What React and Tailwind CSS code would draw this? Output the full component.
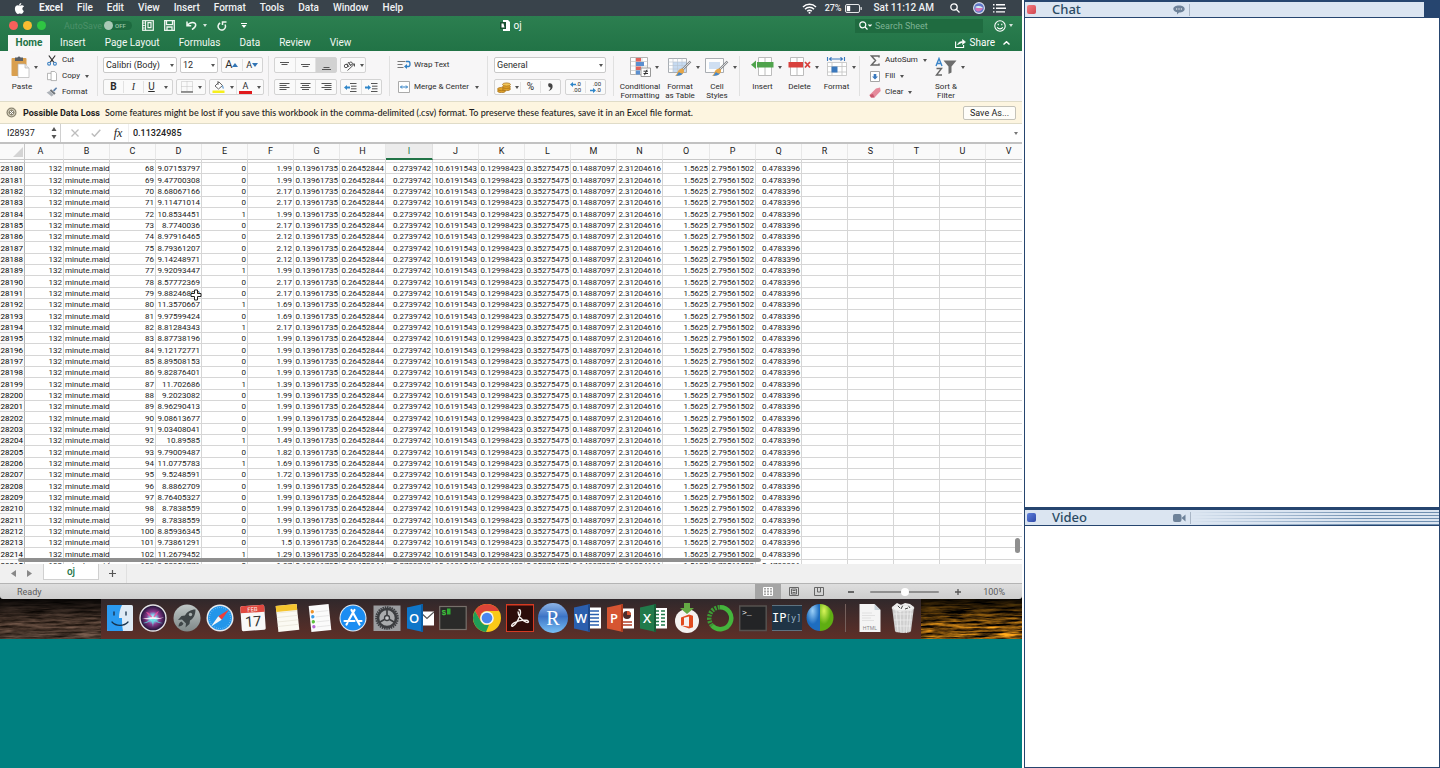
import React from "react";

const COLUMNS = "ABCDEFGHIJKLMNOPQRSTUV".split("");

const ROWS = [
  [68, "9.07153797", 0, "1.99"],
  [69, "9.47700308", 0, "1.99"],
  [70, "8.68067166", 0, "2.17"],
  [71, "9.11471014", 0, "2.17"],
  [72, "10.8534451", 1, "1.99"],
  [73, "8.7740036", 0, "2.17"],
  [74, "8.97916465", 0, "2.12"],
  [75, "8.79361207", 0, "2.12"],
  [76, "9.14248971", 0, "2.12"],
  [77, "9.92093447", 1, "1.99"],
  [78, "8.57772369", 0, "2.17"],
  [79, "9.88246808", 0, "2.17"],
  [80, "11.3570667", 1, "1.69"],
  [81, "9.97599424", 0, "1.69"],
  [82, "8.81284343", 1, "2.17"],
  [83, "8.87738196", 0, "1.99"],
  [84, "9.12172771", 0, "1.99"],
  [85, "8.89508153", 0, "1.99"],
  [86, "9.82876401", 0, "1.99"],
  [87, "11.702686", 1, "1.39"],
  [88, "9.2023082", 0, "1.99"],
  [89, "8.96290413", 0, "1.99"],
  [90, "9.08613677", 0, "1.99"],
  [91, "9.03408041", 0, "1.99"],
  [92, "10.89585", 1, "1.49"],
  [93, "9.79009487", 0, "1.82"],
  [94, "11.0775783", 1, "1.69"],
  [95, "9.5248591", 0, "1.72"],
  [96, "8.8862709", 0, "1.99"],
  [97, "8.76405327", 0, "1.99"],
  [98, "8.7838559", 0, "1.99"],
  [99, "8.7838559", 0, "1.99"],
  [100, "8.85936345", 0, "1.99"],
  [101, "9.73861291", 0, "1.5"],
  [102, "11.2679452", 1, "1.29"],
  [103, "9.02956771", 0, "1.87"],
];

const STORE = [
  "0.13961735", "0.26452844", "0.2739742", "10.6191543", "0.12998423", "0.35275475",
  "0.14887097", "2.31204616", "1.5625", "2.79561502", "0.4783396",
];

function Caret({ className = "" }) {
  return (
    <svg viewBox="0 0 4 3" className={"h-[3px] w-1 shrink-0 opacity-80 " + className} fill="currentColor" aria-hidden="true">
      <path d="M0 0h4L2 3z" />
    </svg>
  );
}

/* ---------- menu bar ---------- */

function MenuBar() {
  return (
    <header className="flex h-4 items-center bg-[#39434b] pr-4 pl-[14px] text-[10px] leading-4 font-medium text-[#f0f2f3]">
      <svg viewBox="0 0 14 16" className="h-[11px] w-[11px]" fill="#fff" aria-label="Apple">
        <path d="M9.600 0c.1 1-.3 1.900-.9 2.600-.6.7-1.500 1.200-2.300 1.100-.1-.9.300-1.900.900-2.500C7.900.5 8.900 0 9.600 0zM12.900 5.500c-.1.100-1.700 1-1.700 3 0 2.300 2 3.100 2.100 3.100 0 .1-.3 1.100-1.100 2.200-.7 1-1.400 2-2.500 2s-1.400-.6-2.600-.6c-1.200 0-1.600.7-2.600.7s-1.700-.9-2.500-2.100C1 12.400.3 10.200.3 8.200c0-3.300 2.200-5 4.300-5 1.100 0 2.100.700 2.800.700.700 0 1.700-.800 3-.800.500 0 2.200 0 3.300 1.600z" />
      </svg>
      <nav className="ml-[14px] flex gap-[14px]" aria-label="Menu bar">
        <a href="#excel" className="font-bold">Excel</a>
        <a href="#file">File</a>
        <a href="#edit">Edit</a>
        <a href="#view">View</a>
        <a href="#insert">Insert</a>
        <a href="#format">Format</a>
        <a href="#tools">Tools</a>
        <a href="#data">Data</a>
        <a href="#window">Window</a>
        <a href="#help">Help</a>
      </nav>
      <div className="ml-auto flex items-center">
        <svg viewBox="0 0 15 11" className="h-[11px] w-[15px]" fill="none" stroke="#fff" strokeWidth="1.500" aria-label="Wi-Fi">
          <path d="M1 4a9.200 9.200 0 0 1 13 0M3 6.200a6.400 6.400 0 0 1 9 0M5.200 8.300a3.300 3.300 0 0 1 4.600 0" />
          <circle cx="7.500" cy="9.800" r="1" fill="#fff" stroke="none" />
        </svg>
        <span className="ml-2 text-[9px]">27%</span>
        <svg viewBox="0 0 17 9" className="ml-[3px] h-[9px] w-[17px]" aria-label="Battery">
          <rect x=".5" y=".5" width="14" height="8" rx="1.500" fill="none" stroke="#e6e8e9" />
          <rect x="1.800" y="1.800" width="3.400" height="5.400" fill="#fff" />
          <rect x="15.500" y="3" width="1.300" height="3" rx=".6" fill="#e6e8e9" />
        </svg>
        <time className="ml-3">Sat 11:12 AM</time>
        <svg viewBox="0 0 10 10" className="ml-4 h-[10px] w-[10px]" fill="none" stroke="#fff" strokeWidth="1.300" aria-label="Search">
          <circle cx="4" cy="4" r="3.200" />
          <path d="M6.500 6.500 9.500 9.500" />
        </svg>
        <svg viewBox="0 0 12 12" className="ml-[13px] h-3 w-3" aria-label="Siri">
          <circle cx="6" cy="6" r="5.400" fill="#5d78c9" stroke="#dfe3f0" strokeWidth="1.100" />
          <path d="M2 7c2-4 5-4 8-1-2 4-6 5-8 1z" fill="#d477b8" />
          <path d="M2 5c3-2 6-1 8 1-3-.5-5 1-8-1z" fill="#c9f1f7" />
        </svg>
        <svg viewBox="0 0 13 9" className="ml-2 h-[9px] w-[13px]" fill="#fff" aria-label="Notifications">
          <path d="M0 0h1.500v1.400H0zM3 0h9v1.400H3zM0 3.600h1.500V5H0zM3 3.600h10V5H3zM0 7.200h1.500v1.400H0zM3 7.200h9v1.400H3z" />
        </svg>
      </div>
    </header>
  );
}

/* ---------- title bar and tabs ---------- */

function TitleBar() {
  return (
    <div className="grid h-[19px] grid-cols-[1fr_auto_1fr] items-center text-white">
      <div className="flex items-center pl-[9px]">
        <button aria-label="Close" className="size-[9px] rounded-full bg-[#f8605b]" />
        <button aria-label="Minimize" className="ml-[5px] size-[9px] rounded-full bg-[#f8bd31]" />
        <button aria-label="Zoom" className="ml-[5px] size-[9px] rounded-full bg-[#2fc643]" />
        <span className="ml-[18px] w-10 text-[9px] leading-3 text-[#4b9069]">AutoSave</span>
        <button role="switch" aria-checked="false" aria-label="AutoSave" className="flex h-[9px] w-7 items-center rounded-full bg-[#1d6a3f] text-[6px] leading-[9px] font-medium text-[#9ac4aa]">
          <span className="size-[9px] rounded-full bg-[#a9c9b6]" />
          <span className="ml-[2px]">OFF</span>
        </button>
        <button aria-label="Layout" className="ml-[10px]">
          <svg viewBox="0 0 12 11" className="h-[11px] w-3" fill="none" stroke="#eef6f0" strokeWidth="1.200">
            <rect x=".7" y=".7" width="10.600" height="9.600" />
            <path d="M3.500.7v9.600M.7 3h2M.7 5.500h2M.7 8h2M6 2.700h3v5H6z" />
          </svg>
        </button>
        <button aria-label="Save" className="ml-[10px]">
          <svg viewBox="0 0 11 11" className="size-[11px]" fill="none" stroke="#eef6f0" strokeWidth="1.300">
            <path d="M.7.7h9.600v9.600H.7zM2.500.7v4h6v-4M3 10V7h5v3" />
          </svg>
        </button>
        <button aria-label="Undo" className="ml-[11px] flex items-center">
          <svg viewBox="0 0 11 9" className="h-[9px] w-[11px]" fill="none" stroke="#eef6f0" strokeWidth="1.500">
            <path d="M1 .5v4.200h4.200M1.200 4.500C4 .5 9.700.5 9.700 4 9.700 6 7.500 7.500 6 8.600" />
          </svg>
          <Caret className="ml-[6px]" />
        </button>
        <button aria-label="Redo" className="ml-[10px]">
          <svg viewBox="0 0 10 10" className="size-[10px]" fill="none" stroke="#eef6f0" strokeWidth="1.500">
            <path d="M8 3.500A3.700 3.700 0 1 1 3.200 2M5.500 4V1h4" />
          </svg>
        </button>
        <button aria-label="Customize toolbar" className="ml-[14px]">
          <svg viewBox="0 0 6 5" className="h-[5px] w-[6px]" fill="#fff">
            <path d="M0 0h6v1H0zM.5 2h5L3 5z" />
          </svg>
        </button>
      </div>
      <h1 className="flex items-center gap-[3px] text-[10px] leading-3">
        <svg viewBox="0 0 10 11" className="h-[11px] w-[10px]">
          <path d="M3 0h5l2 2v9H3z" fill="#fff" />
          <path d="M0 2h6v7H0z" fill="#1a4f31" />
          <path d="M1.500 3.500h2l1 4h-3z" fill="#fff" />
        </svg>
        oj
      </h1>
      <div className="flex items-center justify-end pr-[9px]">
        <label className="flex h-[14px] w-32 items-center bg-[#1f6b40] pl-1 text-white">
          <svg viewBox="0 0 13 9" className="h-[9px] w-[13px]" fill="none" stroke="currentColor" strokeWidth="1.200">
            <circle cx="3.800" cy="3.800" r="3" />
            <path d="M6 6l2.500 2.500M9.500 3.500 11 5l1.500-1.500" />
          </svg>
          <input aria-label="Search Sheet" placeholder="Search Sheet" className="ml-[3px] w-24 bg-transparent text-[9px] leading-3 outline-none placeholder:text-[#7db394]" />
        </label>
        <button aria-label="Feedback" className="ml-[11px] flex items-center gap-[3px]">
          <svg viewBox="0 0 12 12" className="size-3" fill="none" stroke="#fff" strokeWidth="1.100">
            <circle cx="6" cy="6" r="5.200" />
            <path d="M3.300 7.200c1 2.200 4.400 2.200 5.400 0M4.200 3.800v1.400M7.800 3.800v1.400" />
          </svg>
          <Caret />
        </button>
      </div>
    </div>
  );
}

function Tabs() {
  return (
    <div className="flex h-4 items-center gap-[19px] pr-3 pl-2 text-[10px] leading-4 text-[#f2f8f4]">
      <button className="h-4 w-[42px] bg-[#f7f7f7] font-bold text-[#217346]">Home</button>
      <button className="-ml-[9px]">Insert</button>
      <button>Page Layout</button>
      <button>Formulas</button>
      <button>Data</button>
      <button>Review</button>
      <button>View</button>
      <button className="ml-auto flex items-center gap-1 text-white">
        <svg viewBox="0 0 11 9" className="h-[9px] w-[11px]" fill="none" stroke="#fff" strokeWidth="1.100">
          <path d="M.6 2.500v6h8V6" />
          <path d="M2.500 6C3 3.500 5 2.500 7.500 2.500V.5L10.500 3 7.500 5.500v-2" fill="#fff" strokeWidth=".6" />
        </svg>
        Share
        <svg viewBox="0 0 7 4" className="ml-1 h-1 w-[7px]" fill="none" stroke="#fff" strokeWidth="1.400">
          <path d="M.5 3.500 3.500.7l3 2.800" />
        </svg>
      </button>
    </div>
  );
}

/* ---------- ribbon ---------- */

const box = "flex h-4 items-center rounded-[2px] border border-[#d3d3d3] bg-[#fafafa]";

function Divider() {
  return <div className="mt-[5px] h-10 w-px shrink-0 bg-[#e0e0e0]" />;
}

function Picker({ label, value, width }) {
  return (
    <div className={"relative h-4 " + width}>
      <select aria-label={label} className="block h-4 w-full appearance-none rounded-[2px] border border-[#c9c9c9] bg-white pl-[2px] text-[9px] leading-[14px]">
        <option>{value}</option>
      </select>
      <Caret className="pointer-events-none absolute top-[7px] right-[3px]" />
    </div>
  );
}

function BigButton({ icon, lines, width }) {
  return (
    <button className={"flex shrink-0 flex-col items-center pt-[6px] " + width}>
      <span className="flex h-5 items-center gap-1 pl-2">
        {icon}
        <Caret />
      </span>
      <span className="mt-[5px] flex flex-col text-[8px] leading-[9px] whitespace-nowrap">
        {lines.map((l) => (
          <span key={l}>{l}</span>
        ))}
      </span>
    </button>
  );
}

function SmallButton({ icon, label, caret }) {
  return (
    <button className="flex h-4 items-center text-[8px] leading-4 whitespace-nowrap">
      <span className="mr-1 flex w-3 justify-center">{icon}</span>
      {label}
      {caret && <Caret className="ml-[5px]" />}
    </button>
  );
}

function Lines({ d, label, active }) {
  return (
    <button aria-label={label} className={"flex h-full flex-1 items-center justify-center border-r border-[#e2e2e2] last:border-r-0 " + (active ? "bg-[#d2d2d2]" : "")}>
      <svg viewBox="0 0 11 10" className="h-[10px] w-[11px]" stroke="#555" strokeWidth="1" fill="none">
        <path d={d} />
      </svg>
    </button>
  );
}

function IndentIcon({ flip }) {
  return (
    <svg viewBox="0 0 13 9" className="h-[9px] w-[13px]" fill="none">
      <path d="M6 .5h6.500M7 3.200h5.500M7 5.800h5.500M6 8.500h6.500" stroke="#555" />
      <path d={flip ? "M0 3.500h3V2l3 2.500L3 7V5.500H0z" : "M6 3.500H3V2L0 4.500 3 7V5.500h3z"} fill="#2f86c9" />
    </svg>
  );
}

function TableBrush({ blue }) {
  return (
    <svg viewBox="0 0 24 20" className="h-5 w-6">
      <path d="M.5 1.500h18v14H.5z" fill="#fdfdfd" stroke="#a9adb2" />
      {blue ? (
        <path d="M4 5h11v7H4z" fill="#cfdff2" />
      ) : (
        <g>
          <path d="M5 5h13v10H5z" fill="#c6daf1" />
          <path d="M.5 5h18M.5 8.500h18M.5 12h18M5 1.500v14M9.500 1.500v14M14 1.500v14" stroke="#b9c4d0" strokeWidth=".6" />
        </g>
      )}
      <path d="M22.500 4.500 14 13" stroke="#85888c" strokeWidth="2.400" />
      <path d="M22.500 4.500 15 12" stroke="#d9dadc" strokeWidth="1" />
      <path d="M14.500 11.500c2 1 2 3.500.5 5-2 2-5.500 2.500-8 2 2-1 2-2.500 3-4.500 1-1.500 2.500-2.500 4.500-2.500z" fill="#e6a648" />
      <path d="M8 18.500c2-1 2-2.500 3-3.500 1 1.500 2.500 1.500 4 1.500-2 2-4.500 2.500-7 2z" fill="#3f86cf" />
    </svg>
  );
}

function Ribbon() {
  return (
    <div className="flex h-[50px] overflow-hidden bg-[#f7f6f7] text-[#2b2b2b]">
      <div className="flex w-[97px] shrink-0">
        <button className="flex w-[44px] flex-col items-center pt-[5px]">
          <span className="flex items-center gap-1 pl-1">
            <svg viewBox="0 0 19 22" className="h-[22px] w-[19px]">
              <rect x=".5" y="2" width="15" height="18" rx="1" fill="#d99f4e" />
              <path d="M4 1.500h2.500a1.600 1.600 0 0 1 3 0H12V5H4z" fill="#595f66" />
              <path d="M7 8h7l4 4v9.500H7z" fill="#fff" stroke="#b5b5b5" strokeWidth=".7" />
              <path d="M14 8v4h4" fill="#e6e6e6" stroke="#b5b5b5" strokeWidth=".7" />
            </svg>
            <Caret />
          </span>
          <span className="mt-1 text-[8px] leading-[9px]">Paste</span>
        </button>
        <div className="ml-[2px] flex flex-col pt-px">
          <SmallButton
            label="Cut"
            icon={
              <svg viewBox="0 0 11 12" className="h-[11px] w-[10px]" fill="none">
                <path d="M2 .5 7.500 8M9 .5 3.500 8" stroke="#333" strokeWidth="1.300" />
                <circle cx="2.300" cy="9.500" r="1.600" stroke="#3a7fc0" strokeWidth="1.200" />
                <circle cx="8.700" cy="9.500" r="1.600" stroke="#3a7fc0" strokeWidth="1.200" />
              </svg>
            }
          />
          <SmallButton
            label="Copy"
            caret
            icon={
              <svg viewBox="0 0 11 12" className="h-[11px] w-[10px]" fill="#fff" stroke="#9b9b9b" strokeWidth=".8">
                <path d="M.5 2.500h4l2 2v5h-6z" />
                <path d="M4.500.5h4l2 2v8h-6z" />
              </svg>
            }
          />
          <SmallButton
            label="Format"
            icon={
              <svg viewBox="0 0 12 11" className="h-[10px] w-[12px]">
                <path d="M7 3.500 10.500.3l1.200 1.200L8.500 5z" fill="#5d7fa8" />
                <path d="m5 2.500 5 4.500-1.500 1.500L3.500 4z" fill="#70757b" />
                <path d="M3.300 4.300 8 8.500l-2.500 2L0 6z" fill="#aeb3b9" />
              </svg>
            }
          />
        </div>
      </div>
      <Divider />

      <div className="ml-[5px] flex w-[161px] shrink-0 flex-col gap-[6px] pt-[6px]">
        <div className="flex gap-[3px]">
          <Picker label="Font" value="Calibri (Body)" width="w-[74px]" />
          <Picker label="Font size" value="12" width="w-[38px]" />
          <div className={box + " w-[42px]"}>
            <button aria-label="Increase font size" className="flex flex-1 items-center justify-center border-r border-[#e2e2e2] text-[11px] leading-3">
              A
              <svg viewBox="0 0 6 4" className="h-1 w-[6px]"><path d="M0 4h6L3 0z" fill="#2f74b5" /></svg>
            </button>
            <button aria-label="Decrease font size" className="flex flex-1 items-center justify-center text-[9px] leading-3">
              A
              <svg viewBox="0 0 6 4" className="h-1 w-[6px]"><path d="M0 0h6L3 4z" fill="#2f74b5" /></svg>
            </button>
          </div>
        </div>
        <div className="flex gap-[3px]">
          <div className={box + " w-[70px] text-[10px] leading-3"}>
            <button className="w-5 border-r border-[#e2e2e2] font-bold">B</button>
            <button className="w-5 border-r border-[#e2e2e2] font-['Liberation_Serif',serif] italic">I</button>
            <button className="flex flex-1 items-center justify-center gap-[9px]"><span className="underline">U</span><Caret /></button>
          </div>
          <div className={box + " w-[30px]"}>
            <button aria-label="Borders" className="flex w-full items-center justify-center gap-[5px]">
              <svg viewBox="0 0 12 12" className="size-3" fill="none">
                <path d="M.5.500h11v10H.500zM6 .500v10M.500 5.500h11" stroke="#c2c2c2" strokeDasharray="1 1" />
                <path d="M0 11h12" stroke="#555" strokeWidth="1.200" />
              </svg>
              <Caret />
            </button>
          </div>
          <div className={box + " w-[55px]"}>
            <button aria-label="Fill color" className="flex flex-1 items-center justify-center gap-[5px] border-r border-[#e2e2e2]">
              <svg viewBox="0 0 13 14" className="h-[14px] w-[13px]">
                <path d="m3 6 4-4 3.500 3.500-4 3.500z" fill="#fff" stroke="#666" />
                <path d="M6 1v4" stroke="#666" />
                <path d="M10.500 5c1 1.500 1.500 3 .7 4-.8-.8-1-2-.7-4z" fill="#3a86cc" />
                <path d="M.500 10.500h12V13h-12z" fill="#f6ef1c" />
              </svg>
              <Caret />
            </button>
            <button aria-label="Font color" className="flex flex-1 items-center justify-center gap-[5px]">
              <span className="flex w-[13px] flex-col items-center text-[9px] leading-[10px]">
                A
                <span className="h-[3px] w-[13px] bg-[#e0191c]" />
              </span>
              <Caret />
            </button>
          </div>
        </div>
      </div>
      <div className="ml-1"><Divider /></div>

      <div className="ml-[5px] flex w-[110px] shrink-0 flex-col gap-[6px] pt-[6px]">
        <div className="flex gap-[3px]">
          <div className={box + " w-[63px]"}>
            <Lines label="Top align" d="M1 2.500h9M2.500 4.500h6" />
            <Lines label="Middle align" d="M1 4.500h9M2.500 6.500h6" />
            <Lines label="Bottom align" d="M1 9.500h9M2.500 7.500h6" active />
          </div>
          <div className={box + " w-[26px]"}>
            <button aria-label="Orientation" className="flex w-full items-center justify-center gap-1">
              <svg viewBox="0 0 13 12" className="h-3 w-[13px]" fill="none" stroke="#555">
                <circle cx="3" cy="7" r="1.700" />
                <path d="M4 4.500 6 8M5 3l3 4" />
                <circle cx="7.800" cy="4.500" r="1.500" />
                <path d="M4.500 11.500 11.500 5M11.500 7.500V5H9" />
              </svg>
              <Caret />
            </button>
          </div>
        </div>
        <div className="flex gap-[3px]">
          <div className={box + " w-[63px]"}>
            <Lines label="Align left" d="M.5 1.500h10M.5 3.500h7M.5 5.500h10M.5 7.500h7" />
            <Lines label="Center" d="M.5 1.500h10M2 3.500h7M.5 5.500h10M2 7.500h7" />
            <Lines label="Align right" d="M.5 1.500h10M3.500 3.500h7M.5 5.500h10M3.500 7.500h7" />
          </div>
          <div className={box + " w-[42px]"}>
            <button aria-label="Decrease indent" className="flex h-full flex-1 items-center justify-center border-r border-[#e2e2e2]"><IndentIcon /></button>
            <button aria-label="Increase indent" className="flex h-full flex-1 items-center justify-center"><IndentIcon flip /></button>
          </div>
        </div>
      </div>
      <div className="ml-[5px]"><Divider /></div>

      <div className="ml-[7px] flex w-[84px] shrink-0 flex-col gap-[6px] pt-[6px] text-[8px]">
        <button className="flex h-4 items-center gap-[3px] whitespace-nowrap">
          <svg viewBox="0 0 14 10" className="h-[10px] w-[14px] shrink-0" fill="none">
            <path d="M.5 1.500h8M.5 4.500h5M.5 7.500h6" stroke="#777" />
            <path d="M9 1.500h2.500c2 0 2 5 0 5H9" stroke="#2f7fc4" strokeWidth="1.300" />
            <path d="M10 4v5L7 6.500z" fill="#2f7fc4" />
          </svg>
          Wrap Text
        </button>
        <button className="flex h-4 items-center gap-[3px] whitespace-nowrap">
          <svg viewBox="0 0 14 12" className="h-3 w-[14px] shrink-0" fill="none">
            <path d="M1.500.5h11v11h-11z" fill="#fff" stroke="#aaa" />
            <path d="M3.500 6h7M5 4.500 3.500 6 5 7.500M9 4.500 10.500 6 9 7.500" stroke="#2f7fc4" />
          </svg>
          Merge &amp; Center
          <Caret className="ml-[3px]" />
        </button>
      </div>
      <div className="ml-[6px]"><Divider /></div>

      <div className="ml-[6px] flex w-[112px] shrink-0 flex-col gap-[6px] pt-[6px]">
        <Picker label="Number format" value="General" width="w-full" />
        <div className="flex gap-[4px]">
          <div className={box + " w-[67px] text-[10px] leading-3"}>
            <button aria-label="Currency" className="flex w-[26px] items-center justify-center gap-1 border-r border-[#e2e2e2]">
              <svg viewBox="0 0 14 11" className="h-[11px] w-[14px]" fill="#e2a42c" stroke="#a06a14" strokeWidth=".7">
                <ellipse cx="4.500" cy="9" rx="4" ry="1.600" />
                <ellipse cx="4.500" cy="7" rx="4" ry="1.600" />
                <ellipse cx="9.500" cy="7" rx="4" ry="1.600" />
                <ellipse cx="9.500" cy="4.800" rx="4" ry="1.600" />
                <ellipse cx="9.500" cy="2.500" rx="4" ry="1.600" fill="#f3c557" />
              </svg>
              <Caret />
            </button>
            <button className="flex-1 border-r border-[#e2e2e2]">%</button>
            <button aria-label="Comma style" className="flex flex-1 justify-center">
              <svg viewBox="0 0 5 8" className="h-2 w-[5px]"><path d="M1 .3C4 0 5 2 4.500 4.500 4 6.500 2.500 7.500.500 8 2 6.500 2.500 5.500 2.500 4.500 1 4.500.2 3.500.2 2.300.2 1 .5.500 1 .3z" fill="#444" /></svg>
            </button>
          </div>
          <div className={box + " w-[41px] text-[6px] leading-[6px]"}>
            <button aria-label="Increase decimal" className="flex flex-1 flex-col items-end border-r border-[#e2e2e2] pr-1">
              <span className="flex items-center"><svg viewBox="0 0 6 5" className="h-[5px] w-[6px]"><path d="M0 2.500 3 0v1.700h3v1.600H3V5z" fill="#2f86c9" /></svg>.0</span>
              <span>.00</span>
            </button>
            <button aria-label="Decrease decimal" className="flex flex-1 flex-col items-end pr-1">
              <span>.00</span>
              <span className="flex items-center"><svg viewBox="0 0 6 5" className="h-[5px] w-[6px]"><path d="M6 2.500 3 0v1.700H0v1.600h3V5z" fill="#2f86c9" /></svg>.0</span>
            </button>
          </div>
        </div>
      </div>
      <div className="ml-[7px]"><Divider /></div>

      <div className="ml-[5px] flex w-[120px] shrink-0">
        <BigButton
          width="w-[42px]"
          lines={["Conditional", "Formatting"]}
          icon={
            <svg viewBox="0 0 21 20" className="h-5 w-[21px]">
              <path d="M.5.5h17v17H.5z" fill="#fff" stroke="#b3b3b3" />
              <path d="M.5 4.500h17M.5 9h17M.5 13.500h17M5.500.5v17M12 .5v17" stroke="#c4c4c4" strokeWidth=".7" />
              <path d="M6 1h5v3.500H6zM6 9.500h5v3.500H6z" fill="#e0635c" />
              <path d="M6 5h8v4H6zM6 13.500h4v4H6z" fill="#5b8fd0" />
              <path d="M11 11h9.500v8.500H11z" fill="#fff" stroke="#999" />
              <path d="M13.500 14.200h4.500M13.500 16.500h4.500M17 12.700l-2.500 5.500" stroke="#333" />
            </svg>
          }
        />
        <BigButton width="w-[38px]" lines={["Format", "as Table"]} icon={<TableBrush />} />
        <BigButton width="w-[36px]" lines={["Cell", "Styles"]} icon={<TableBrush blue />} />
      </div>
      <Divider />

      <div className="ml-1 flex w-[112px] shrink-0">
        <BigButton
          width="w-[37px]"
          lines={["Insert"]}
          icon={
            <svg viewBox="0 0 23 20" className="h-5 w-[23px]">
              <path d="M7.500.5h13v18h-13zM14 .5v18" fill="#fff" stroke="#bcbcbc" />
              <path d="M6 5h16.500v5.500H6z" fill="#4fa34c" />
              <path d="M0 7.700 5 3.500v8.500z" fill="#4fa34c" />
            </svg>
          }
        />
        <BigButton
          width="w-[37px]"
          lines={["Delete"]}
          icon={
            <svg viewBox="0 0 23 20" className="h-5 w-[23px]">
              <path d="M2.500.5h13v18h-13zM9 .5v18" fill="#fff" stroke="#bcbcbc" />
              <path d="M.5 5h14.500v5.500H.5z" fill="#d8413d" />
              <path d="m17 5 5 5.500M22 5l-5 5.500" stroke="#d8413d" strokeWidth="1.800" />
            </svg>
          }
        />
        <BigButton
          width="w-[37px]"
          lines={["Format"]}
          icon={
            <svg viewBox="0 0 22 20" className="h-5 w-[22px]">
              <path d="M1.500 5.500h19v13h-19zM1.500 9.500h19M1.500 15h19M6 5.500v13M16 5.500v13" fill="#fff" stroke="#c0c0c0" strokeWidth=".8" />
              <path d="M5.500 9.500h6v6h-6z" fill="#3a78bd" />
              <path d="M1.500 0v4M18.500 0v4M3.500 2h13M5.500.3 3.500 2l2 1.700M14.500.3l2 1.700-2 1.700" stroke="#3a78bd" fill="none" strokeWidth="1.100" />
            </svg>
          }
        />
      </div>
      <div className="ml-[3px]"><Divider /></div>

      <div className="ml-[9px] flex shrink-0">
        <div className="flex w-[58px] flex-col pt-px">
          <SmallButton
            label="AutoSum"
            caret
            icon={
              <svg viewBox="0 0 10 11" className="h-[11px] w-[10px]" fill="none" stroke="#666" strokeWidth="1.500">
                <path d="M9 2.500V1H1.500L5.500 5.500 1.500 10H9V8.500" />
              </svg>
            }
          />
          <SmallButton
            label="Fill"
            caret
            icon={
              <svg viewBox="0 0 10 11" className="h-[11px] w-[10px]">
                <path d="M.5.5h9v10h-9z" fill="#fff" stroke="#a5a5a5" />
                <path d="M3.700 3h2.600v2.500H8L5 8.500 2 5.500h1.700z" fill="#3a78bd" />
              </svg>
            }
          />
          <SmallButton
            label="Clear"
            caret
            icon={
              <svg viewBox="0 0 12 11" className="h-[11px] w-3">
                <path d="M7 1.500 11 .5l.7 3.500L5.500 10.500H2L.5 8z" fill="#e58a9b" />
                <path d="M.5 8 4 7l1.500 3.500H2z" fill="#c9576d" />
              </svg>
            }
          />
        </div>
        <BigButton
          width="w-[38px]"
          lines={["Sort &", "Filter"]}
          icon={
            <svg viewBox="0 0 22 20" className="h-5 w-[22px]">
              <path d="M1 9 4 1.500 7 9M2 6.500h4" fill="none" stroke="#3a84c8" strokeWidth="1.400" />
              <path d="M1.500 11.500h5L1.500 18h5.500" fill="none" stroke="#666" strokeWidth="1.400" />
              <path d="M8.500 3.500h13L16.500 9.500v6l-3 1.500V9.500z" fill="#6d6d6d" />
            </svg>
          }
        />
      </div>
    </div>
  );
}

/* ---------- notice and formula bar ---------- */

function Notice() {
  return (
    <div role="alert" className="flex h-[23px] items-center border-y border-[#e0dcc8] bg-[#fdf5e0] pr-[6px] pl-[6px] text-[9px] leading-3 text-[#1c1c1c]">
      <button aria-label="Dismiss">
        <svg viewBox="0 0 11 11" className="size-[11px]">
          <circle cx="5.500" cy="5.500" r="5" fill="#8a8471" />
          <circle cx="5.500" cy="5.500" r="3.400" fill="none" stroke="#e9e2cc" strokeWidth=".8" />
          <path d="m3.800 3.800 3.400 3.400M7.200 3.800 3.800 7.200" stroke="#fff" />
        </svg>
      </button>
      <strong className="ml-[6px] whitespace-nowrap">Possible Data Loss</strong>
      <span className="ml-[5px] flex-1 truncate font-[Lato,sans-serif] font-medium">
        Some features might be lost if you save this workbook in the comma-delimited (.csv) format. To preserve these features, save it in an Excel file format.
      </span>
      <button className="h-[14px] w-[53px] rounded-[2px] border border-[#c4c2b8] bg-[#fefdf9] leading-3">Save As...</button>
    </div>
  );
}

function FormulaBar() {
  return (
    <div className="flex h-5 items-center border-b-2 border-[#c2c2c2] bg-white pr-1 text-[#222]">
      <input aria-label="Name box" defaultValue="I28937" className="ml-[7px] w-10 bg-transparent text-[9px] leading-3 outline-none" />
      <svg viewBox="0 0 6 12" className="ml-1 h-3 w-[6px]" fill="#555" aria-hidden="true">
        <path d="M.5 4h5L3 0zM.5 8h5L3 12z" />
      </svg>
      <div className="ml-[3px] h-full w-px bg-[#d0d0d0]" />
      <button aria-label="Cancel" className="ml-[10px]">
        <svg viewBox="0 0 8 8" className="size-2" stroke="#bdbdbd" strokeWidth="1.300"><path d="m.5.5 7 7M7.500.5l-7 7" /></svg>
      </button>
      <button aria-label="Enter" className="ml-3">
        <svg viewBox="0 0 10 8" className="h-2 w-[10px]" fill="none" stroke="#bdbdbd" strokeWidth="1.500"><path d="M.7 4.500 3.500 7.200 9.300.7" /></svg>
      </button>
      <button aria-label="Insert function" className="ml-3 w-[10px] font-['Liberation_Serif',serif] text-[12px] leading-4 italic">fx</button>
      <div className="ml-[5px] h-full w-px bg-[#efefef]" />
      <input aria-label="Formula" defaultValue="0.11324985" className="ml-[4px] flex-1 bg-transparent text-[9px] leading-3 font-medium outline-none" />
      <Caret className="text-[#555]" />
    </div>
  );
}

/* ---------- sheet ---------- */

function Sheet() {
  const cell = "border-r border-b border-[#d6d6d6] p-0 pt-px pr-px text-right whitespace-nowrap";
  return (
    <div className="relative h-[420px] overflow-hidden bg-white">
      <table className="w-[1032px] table-fixed border-separate border-spacing-0 text-[8px] leading-[9px] text-[#222]">
        <colgroup>
          <col className="w-[25px]" />
          {COLUMNS.map((c) => (
            <col key={c} className={c === "A" ? "w-[39px]" : c === "I" || c === "O" ? "w-[47px]" : "w-[46px]"} />
          ))}
        </colgroup>
        <thead>
          <tr className="h-4 bg-[#fafafa]">
            <th className="border-r border-b border-[#c8c8c8] p-0" aria-label="Select all">
              <svg viewBox="0 0 10 10" className="mr-px ml-auto size-[10px]"><path d="M10 0v10H0z" fill="#d4d4d4" /></svg>
            </th>
            {COLUMNS.map((c) => (
              <th
                key={c}
                scope="col"
                className={
                  "border-r p-0 text-[9px] font-normal " +
                  (c === "I"
                    ? "border-b-2 border-r-[#e0e0e0] border-b-[#217346] bg-[#ececec] text-[#217346]"
                    : "border-b border-r-[#e8e8e8] border-b-[#c8c8c8]") +
                  (c === "A" ? " pr-[7px]" : "")
                }
              >
                {c}
              </th>
            ))}
          </tr>
        </thead>
        <tbody>
          <tr className="h-[3px]">
            <td className="border-r border-b border-[#c8c8c8] p-0" />
            {COLUMNS.map((c) => (
              <td key={c} className="border-r border-b border-[#d6d6d6] p-0" />
            ))}
          </tr>
          {ROWS.map((r, i) => (
            <tr key={r[0]} className={i % 3 === 1 ? "h-3" : "h-[11px]"}>
              <th scope="row" className="border-r border-b border-r-[#b5b5b5] border-b-[#d6d6d6] bg-[#fafafa] p-0 pt-px pr-px text-right font-normal text-black">
                {28180 + i}
              </th>
              <td className={cell}>132</td>
              <td className={cell + " pl-px text-left"}>minute.maid</td>
              <td className={cell}>{r[0]}</td>
              <td className={cell}>{r[1]}</td>
              <td className={cell}>{r[2]}</td>
              <td className={cell}>{r[3]}</td>
              {STORE.map((v) => (
                <td key={v} className={cell}>{v}</td>
              ))}
              <td className={cell} />
              <td className={cell} />
              <td className={cell} />
              <td className={cell} />
              <td className={cell} />
            </tr>
          ))}
        </tbody>
      </table>
      <div className="absolute bottom-[2px] left-[18px] h-1 w-[743px] rounded-full bg-[#8f8f8f]" />
      <div className="absolute right-[2px] bottom-[11px] h-[15px] w-[5px] rounded-full bg-[#8f8f8f]" />
      <svg viewBox="0 0 12 12" className="absolute top-[145px] left-[190px] size-3">
        <path d="M4.500 1h3v3.500H11v3H7.500V11h-3V7.500H1v-3h3.500z" fill="#fff" stroke="#222" />
      </svg>
    </div>
  );
}

function SheetTabs() {
  return (
    <div className="flex h-[19px] bg-[#f0f0f0] text-[#555]">
      <button aria-label="Previous sheet" className="ml-[11px]"><svg viewBox="0 0 5 7" className="h-[7px] w-[5px]" fill="#888"><path d="M5 0v7L0 3.500z" /></svg></button>
      <button aria-label="Next sheet" className="ml-[11px]"><svg viewBox="0 0 5 7" className="h-[7px] w-[5px]" fill="#888"><path d="M0 0v7l5-3.500z" /></svg></button>
      <button className="ml-[11px] h-4 w-[56px] border-x border-b border-[#d0d0d0] bg-white text-[10px] leading-4 font-medium text-[#217346]">oj</button>
      <button aria-label="New sheet" className="ml-[10px]"><svg viewBox="0 0 7 7" className="size-[7px]" stroke="#555" strokeWidth="1.200"><path d="M3.500 0v7M0 3.500h7" /></svg></button>
      <div className="ml-[10px] h-full w-px bg-[#e0e0e0]" />
    </div>
  );
}

function StatusBar() {
  return (
    <footer className="flex h-4 items-center rounded-b-[3px] border-t border-[#b4b4b4] bg-linear-to-b from-[#dedede] to-[#cdcdcd] pr-[17px] pl-[17px] text-[9px] leading-3 text-[#5c5c5c]">
      <span>Ready</span>
      <button aria-label="Normal view" className="ml-auto flex h-full w-[26px] items-center justify-center bg-[#a5a5a5]">
        <svg viewBox="0 0 10 9" className="h-[9px] w-[10px]" fill="none" stroke="#fff"><path d="M.5.5h9v8h-9zM.5 3h9M.5 6h9M3.500.5v8M6.500.5v8" /></svg>
      </button>
      <button aria-label="Page layout view" className="ml-2">
        <svg viewBox="0 0 10 9" className="h-[9px] w-[10px]" fill="none" stroke="#666"><path d="M.5.5h9v8h-9zM2.500 2h5v5h-5zM3.500 3.500h3M3.500 5.500h3" /></svg>
      </button>
      <button aria-label="Page break view" className="ml-[15px]">
        <svg viewBox="0 0 10 9" className="h-[9px] w-[10px]" fill="none" stroke="#666"><path d="M.5.5h9v8h-9zM3.500.5V5h3V.5" /></svg>
      </button>
      <button aria-label="Zoom out" className="ml-6 h-[2px] w-[6px] bg-[#666]" />
      <input type="range" aria-label="Zoom" defaultValue="50" className="mx-4 h-[2px] w-[69px] appearance-none rounded-full bg-[#8f8f8f] [&::-webkit-slider-thumb]:size-2 [&::-webkit-slider-thumb]:appearance-none [&::-webkit-slider-thumb]:rounded-full [&::-webkit-slider-thumb]:bg-white" />
      <button aria-label="Zoom in"><svg viewBox="0 0 6 6" className="size-[6px]" stroke="#555" strokeWidth="1.300"><path d="M3 0v6M0 3h6" /></svg></button>
      <span className="ml-[22px]">100%</span>
    </footer>
  );
}

/* ---------- dock ---------- */

function Art({ children }) {
  return <svg viewBox="0 0 28 28" className="size-7">{children}</svg>;
}

function OfficeArt({ color, dark, letter, children }) {
  return (
    <Art>
      {children}
      <path d="M1 3.500 17 0v28L1 24.500z" fill={color} />
      <path d="M15 .5 17 0v28l-2-.5z" fill={dark} />
      <text x="8" y="19" textAnchor="middle" fontSize="13" fontWeight="600" fill="#fff" fontFamily="Open Sans, sans-serif">{letter}</text>
    </Art>
  );
}

const DOCK = [
  ["Finder", (
    <Art>
      <rect x="1" y="1" width="26" height="26" rx="1.500" fill="#dfeaf5" />
      <path d="M2.500 1H16c-2 4-3 8-3 13h3c0 5 .3 9 1 13H2.500A1.500 1.500 0 0 1 1 25.500v-23A1.500 1.500 0 0 1 2.500 1z" fill="#2b9af0" />
      <path d="M8 8v3M20 8v3M6 18c4 4.500 12 4.500 16 0" fill="none" stroke="#16304a" strokeWidth="1.300" strokeLinecap="round" />
    </Art>
  )],
  ["Siri", (
    <Art>
      <defs>
        <radialGradient id="siri"><stop offset="0" stopColor="#fff" /><stop offset=".25" stopColor="#7fd3ee" /><stop offset=".5" stopColor="#8a3a8c" /><stop offset="1" stopColor="#141030" /></radialGradient>
      </defs>
      <circle cx="14" cy="14" r="13" fill="url(#siri)" stroke="#e3e3e6" strokeWidth="1.400" />
      <path d="M4 19c5-1 7-4 10-5 3 1 5 5 10 5-4 1-7-1-9-3l-1 7-1.500-7C10 18 7 20 4 19z" fill="#5de0e0" opacity=".75" />
      <path d="M7 8c3 0 5 3 7 6 1-3 3-6 6-7-2 3-3 6-6 8-3-2-5-4-7-7z" fill="#ef4f9f" opacity=".8" />
      <path d="M3 14c5 1 8-1 11-1s6 2 11 0c-4 3-8 2-11 2s-7 1-11-1z" fill="#fff" opacity=".85" />
    </Art>
  )],
  ["Launchpad", (
    <Art>
      <defs><linearGradient id="lp" x2="0" y2="1"><stop offset="0" stopColor="#bfc7c6" /><stop offset="1" stopColor="#7e8787" /></linearGradient></defs>
      <circle cx="14" cy="14" r="13.500" fill="url(#lp)" />
      <path d="M22.500 5.500c-5 0-8.500 2.500-10.500 6l-3.500.5-3.500 4 4-.5 4 4-.5 4 4-3.500.5-3.500c3.500-2 5.500-6 5.500-11z" fill="#3e4547" />
      <circle cx="17.500" cy="10.500" r="1.700" fill="#a6afae" />
      <path d="M8.500 17.500c-2 .5-3 3-3 5 2 0 4.500-1 5-3z" fill="#3e4547" />
    </Art>
  )],
  ["Safari", (
    <Art>
      <circle cx="14" cy="14" r="13.500" fill="#e6eaee" />
      <circle cx="14" cy="14" r="12" fill="#2396ea" />
      <circle cx="14" cy="14" r="10.500" fill="none" stroke="#bfe2fa" strokeWidth="1" strokeDasharray=".5 1.700" />
      <path d="M23 5.500 12.300 12.300 15.700 15.700z" fill="#ef3e39" />
      <path d="M5 22.500 12.300 12.300 15.700 15.700z" fill="#f5f5f5" />
    </Art>
  )],
  ["Calendar", (
    <Art>
      <g transform="rotate(-4 14 14)">
        <rect x="2" y="1.500" width="24" height="25" rx="1.500" fill="#f8f8f8" />
        <path d="M2 3a1.500 1.500 0 0 1 1.500-1.500h21A1.500 1.500 0 0 1 26 3v5.500H2z" fill="#e0483f" />
        <text x="14" y="7.300" fontSize="5.500" textAnchor="middle" fill="#fff" fontFamily="Inter, sans-serif">FEB</text>
        <text x="14" y="22.500" fontSize="14.500" textAnchor="middle" fill="#333" fontFamily="Roboto, sans-serif">17</text>
      </g>
    </Art>
  )],
  ["Notes", (
    <Art>
      <g transform="rotate(-6 14 14)">
        <path d="M4 1h21v26H4z" fill="#fbfaf3" />
        <path d="M4 1h21v6H4z" fill="#f5c52f" />
        <path d="M4 8h21M4 12.500h21M4 17h21M4 21.500h21" stroke="#e2dfd0" strokeWidth=".6" />
      </g>
    </Art>
  )],
  ["Reminders", (
    <Art>
      <g transform="rotate(-6 14 14)">
        <path d="M4 1h20v26H4z" fill="#fbfbfb" />
        <path d="M10 7.500h13M10 12.500h13M10 17.500h13M10 22.500h13" stroke="#dedede" strokeWidth=".7" />
        <circle cx="7" cy="7" r="1.700" fill="#f0932a" />
        <circle cx="7" cy="12" r="1.700" fill="#3b9de8" />
        <circle cx="7" cy="17" r="1.700" fill="#5cc23e" />
        <circle cx="7" cy="22" r="1.700" fill="#b768d6" />
      </g>
    </Art>
  )],
  ["App Store", (
    <Art>
      <circle cx="14" cy="14" r="13.500" fill="#e9eef2" />
      <circle cx="14" cy="14" r="12.500" fill="#1b8df2" />
      <path d="M15.500 6 9 17.500M12.500 6 20.500 20.500M5.500 17h10M19 17h3.500M7.500 20.500l.7-1.200" stroke="#fff" strokeWidth="2.200" strokeLinecap="round" />
    </Art>
  )],
  ["System Preferences", (
    <Art>
      <rect x=".5" y="1.500" width="27" height="25.500" fill="#9b9da0" />
      <circle cx="14" cy="14" r="10.800" fill="none" stroke="#3b3d40" strokeWidth="2" strokeDasharray="1.500 .8" />
      <circle cx="14" cy="14" r="9" fill="#a9abad" stroke="#3b3d40" strokeWidth="2.600" />
      <path d="M14 14V6M14 14l7 4M14 14l-7 4" stroke="#3b3d40" strokeWidth="1.700" />
      <circle cx="14" cy="14" r="2.500" fill="#c7c9cb" stroke="#3b3d40" strokeWidth="1.300" />
    </Art>
  )],
  ["Outlook", (
    <OfficeArt color="#0f76c9" dark="#0b5ea4" letter="O">
      <path d="M13 7.500h15v14H13z" fill="#fff" />
      <path d="M14 8l7 6.500L28 8" fill="none" stroke="#555" strokeWidth="1.200" />
    </OfficeArt>
  )],
  ["Terminal", (
    <Art>
      <rect x=".7" y="2.500" width="26.500" height="23" fill="#2a2a29" stroke="#77706b" strokeWidth="1.200" />
      <text x="2.500" y="10.500" fontSize="8" fontWeight="700" fill="#3fc63d" fontFamily="Liberation Mono, monospace">$</text>
      <path d="M8 4.500h3.500v6H8z" fill="#2fae33" />
    </Art>
  )],
  ["Chrome", (
    <Art>
      <circle cx="14" cy="14" r="14" fill="#fac918" />
      <path d="M14 0a14 14 0 0 1 12.100 7H14a7 7 0 0 0-6.100 10.500L1.900 7A14 14 0 0 1 14 0z" fill="#dc4437" />
      <path d="M1.900 7 7.900 17.500A7 7 0 0 0 16 20.700L13 28A14 14 0 0 1 1.900 7z" fill="#1f9d58" />
      <circle cx="14" cy="14" r="6.800" fill="#f5f5f5" />
      <circle cx="14" cy="14" r="5.300" fill="#4a86ee" />
    </Art>
  )],
  ["Acrobat", (
    <Art>
      <rect x="0" y=".5" width="28" height="27.500" fill="#2c0c0a" stroke="#d63a22" strokeWidth="2" />
      <path d="M12.500 6c2-1 2.500 2 1.500 5-1.500 4.500-4.500 9.500-7 11-2 1-2-1.500 1-3.200 4-2.200 9-3 12.500-2.500 3 .5 2.500 3-.5 1.900C16 16.500 12 11.500 12 7.500" fill="none" stroke="#f4efed" strokeWidth="1.400" />
    </Art>
  )],
  ["R", (
    <svg viewBox="0 0 30 30" className="size-[30px]">
      <defs><linearGradient id="rr" x2="0" y2="1"><stop offset="0" stopColor="#8eb4e6" /><stop offset=".45" stopColor="#3c74c6" /><stop offset="1" stopColor="#79c0f4" /></linearGradient></defs>
      <circle cx="15" cy="15" r="15" fill="url(#rr)" />
      <text x="15" y="22" fontSize="20" textAnchor="middle" fill="#fff" fontFamily="Liberation Serif, serif">R</text>
    </svg>
  )],
  ["Word", (
    <OfficeArt color="#2b5fae" dark="#1e4a8c" letter="W">
      <path d="M14 3.500h14v21H14z" fill="#fff" />
      <path d="M17 7h9M17 10.500h9M17 14h9M17 17.500h9M17 21h9" stroke="#2b5fae" strokeWidth="1.300" />
    </OfficeArt>
  )],
  ["PowerPoint", (
    <OfficeArt color="#d65532" dark="#b03d1e" letter="P">
      <path d="M14 4.500h14v20H14z" fill="#fff" />
      <circle cx="21" cy="11" r="4" fill="#4c2c2c" />
      <path d="M21 11V7a4 4 0 0 1 4 4z" fill="#d65532" />
      <path d="M17 18h9M17 21h9" stroke="#b33f2a" strokeWidth="1.300" />
    </OfficeArt>
  )],
  ["Excel", (
    <OfficeArt color="#217a4b" dark="#165c36" letter="X">
      <path d="M14 4h14v20.500H14z" fill="#fff" />
      <path d="M17 7h3M22 7h4M17 10.500h3M22 10.500h4M17 14h3M22 14h4M17 17.500h3M22 17.500h4M17 21h3M22 21h4" stroke="#217a4b" strokeWidth="1.500" />
    </OfficeArt>
  )],
  ["Office Installer", (
    <svg viewBox="0 0 28 32" className="h-8 w-7">
      <circle cx="14" cy="19" r="12" fill="#f5f2f0" />
      <path d="m8 15.500 8-3 4 1.200v11.600l-4 1.200-8-3 8 1V14.500l-5 1.200v7L8 23.500z" fill="#e14b1f" />
      <path d="M11 1h6v5h4l-7 6-7-6h4z" fill="#64a944" />
    </svg>
  )],
  ["Anaconda", (
    <Art>
      <path d="M14 3.200A11 11 0 1 1 6 21.500" fill="none" stroke="#44b53c" strokeWidth="4.500" />
      <path d="M6 21.500A11 11 0 0 1 14 3.200" fill="none" stroke="#3c9c35" strokeWidth="4.500" strokeDasharray="2 1.200" />
    </Art>
  )],
  ["Shell", (
    <Art>
      <rect x=".7" y="2" width="26.500" height="24.500" fill="#232426" stroke="#55514f" strokeWidth="1.500" />
      <text x="3" y="10.500" fontSize="8" fill="#fff" fontFamily="Liberation Mono, monospace">&gt;_</text>
    </Art>
  )],
  ["IPython", (
    <svg viewBox="0 0 30 26" className="h-[26px] w-[30px]">
      <rect width="30" height="25" y=".5" fill="#1f3446" />
      <path d="M0 .5h30M0 25.500h30" stroke="#5d7280" />
      <text x="0" y="17" fontSize="12" fill="#fff" fontFamily="DejaVu Sans Mono, monospace">IP</text>
      <text x="14" y="16" fontSize="8.500" fill="#9db7c9" fontFamily="DejaVu Sans Mono, monospace">[y]</text>
    </svg>
  )],
  ["Globe", (
    <Art>
      <defs>
        <radialGradient id="gb" cx=".45" cy=".25"><stop offset="0" stopColor="#9bd0f8" /><stop offset="1" stopColor="#1d6dc0" /></radialGradient>
        <radialGradient id="gg" cx=".3" cy=".25"><stop offset="0" stopColor="#d9f55a" /><stop offset="1" stopColor="#5fae12" /></radialGradient>
      </defs>
      <path d="M14 0a13.500 13.500 0 0 0 0 27z" fill="url(#gb)" />
      <path d="M14 0a13.500 13.500 0 0 1 0 27z" fill="url(#gg)" />
    </Art>
  )],
];

function Wood({ id, base, freq, matrix }) {
  return (
    <svg className="absolute inset-0 h-full w-full" aria-hidden="true">
      <filter id={id} colorInterpolationFilters="sRGB">
        <feTurbulence type="fractalNoise" baseFrequency={freq} numOctaves="4" />
        <feColorMatrix values={matrix} />
      </filter>
      <rect width="100%" height="100%" fill={base} />
      <rect width="100%" height="100%" filter={"url(#" + id + ")"} />
    </svg>
  );
}

function Dock() {
  return (
    <nav aria-label="Dock" className="flex h-10">
      <div className="relative w-[101px] overflow-hidden">
        <Wood id="woodLeft" base="#4a3830" freq="0.04 0.4" matrix="0.6 0 0 0 -0.02  0.48 0 0 0 -0.03  0.42 0 0 0 -0.04  0 0 0 0 1" />
        <div className="absolute inset-0 bg-linear-to-b from-black/90 to-transparent to-60%" />
      </div>
      <div className="flex flex-1 items-center bg-linear-to-b from-[#30282b] to-[#5f2f27] pr-1 pb-[2px] pl-[5px]">
        <div className="flex flex-1 items-center justify-between">
          {DOCK.map(([name, art]) => (
            <button key={name} aria-label={name} className="flex h-9 w-7 items-center justify-center *:shrink-0">{art}</button>
          ))}
        </div>
        <div className="ml-[11px] h-7 w-px bg-[#75605c]" />
        <button aria-label="HTML document" className="ml-[10px]">
          <Art>
            <path d="M3.500 0h15l6 6v22h-21z" fill="#f4f4f4" />
            <path d="M18.500 0v6h6z" fill="#c9d3da" />
            <path d="M6 9h10M6 11.500h13M6 14h9M6 16.500h12" stroke="#dcdcdc" strokeWidth=".8" />
            <text x="14" y="25.500" fontSize="5" textAnchor="middle" fill="#888" fontFamily="Inter, sans-serif">HTML</text>
          </Art>
        </button>
        <button aria-label="Trash" className="ml-[5px]">
          <svg viewBox="0 0 28 32" className="h-8 w-7">
            <path d="M3 5h22l-3 24c-.3 2.500-15.700 2.500-16 0z" fill="#cfcfcf" />
            <path d="M7 8l2 22M11 8l1 23M15 8v23M19 8l-1.500 23M22 8l-2 21M5 12h19M5 18h18M6 24h16" stroke="#ededed" strokeWidth=".8" />
            <path d="M3 5 8 1l4 2 4-2 5 1 4 3-3 4-6-1-5 2-5-2z" fill="#f2f2f2" />
            <path d="m8 3 3 3M14 3l-2 4M19 3l2 3M16 7l3-1" stroke="#444" strokeWidth="1" />
            <ellipse cx="14" cy="6" rx="11" ry="2.800" fill="none" stroke="#e5e5e5" />
          </svg>
        </button>
      </div>
      <div className="relative w-[101px] overflow-hidden">
        <Wood id="woodRight" base="#4a3010" freq="0.04 0.4" matrix="1.900 0 0 0 -0.5  1.250 0 0 0 -0.34  0.2 0 0 0 -0.05  0 0 0 0 1" />
        <div className="absolute inset-0 bg-linear-to-b from-black/90 to-transparent to-70%" />
      </div>
    </nav>
  );
}

/* ---------- side panels ---------- */

function PanelHeader({ title, dot, icon, children }) {
  return (
    <div className="flex h-4 items-center border-b border-[#26456f] bg-[#dbe5f1]">
      <span className={"ml-[2px] size-[9px] rounded-[2px] " + dot} />
      <h2 className="ml-4 w-[121px] font-['Noto_Sans',sans-serif] text-[13px] leading-[15px] font-medium text-[#2a4a63]">{title}</h2>
      {icon}
      <div className="ml-1 h-3 w-px bg-[#a9b6c6]" />
      {children}
    </div>
  );
}

function SidePanels() {
  return (
    <aside className="flex w-[416px] shrink-0 flex-col border-x border-b border-[#26456f] bg-white">
      <section className="flex flex-[663] flex-col border-t-2 border-[#26456f]">
        <PanelHeader
          title="Chat"
          dot="bg-linear-to-br from-[#f47b80] to-[#cf4550]"
          icon={
            <svg viewBox="0 0 12 10" className="h-[10px] w-3">
              <path d="M6 .5c3.300 0 5.700 1.500 5.700 3.500S9.300 7.500 6 7.500l-2 2V7.300C1.800 6.800.3 5.600.3 4 .3 2 2.700.5 6 .5z" fill="#6e8299" />
              <path d="M3 4h1.200M5.400 4h1.200M7.800 4H9" stroke="#fff" strokeWidth="1.200" />
            </svg>
          }
        >
          <div className="ml-auto h-full w-[15px] bg-[#26456f]" />
        </PanelHeader>
      </section>
      <section className="flex flex-[337] flex-col border-t-3 border-[#26456f]">
        <PanelHeader
          title="Video"
          dot="bg-linear-to-br from-[#5f7fdc] to-[#2f49a8]"
          icon={
            <svg viewBox="0 0 13 8" className="h-2 w-[13px]" fill="#6e8299">
              <rect width="8.500" height="8" rx="2" />
              <path d="M8.500 4 12.500.5v7z" />
            </svg>
          }
        >
          <div className="h-full flex-1 bg-[repeating-linear-gradient(to_bottom,transparent_0_2px,#6f8fb0_2px_3px)] mask-l-from-30%" />
        </PanelHeader>
      </section>
    </aside>
  );
}

export default function App() {
  return (
    <div className="flex min-h-screen bg-white font-[Roboto,sans-serif]">
      <main className="flex min-w-0 flex-1 flex-col bg-[#008080]">
        <MenuBar />
        <div className="bg-black">
          <div className="bg-linear-to-b from-[#2c7f50] to-[#217346]">
            <TitleBar />
            <Tabs />
          </div>
          <Ribbon />
          <Notice />
          <FormulaBar />
          <Sheet />
          <SheetTabs />
          <StatusBar />
        </div>
        <Dock />
      </main>
      <div className="w-[2px] shrink-0 bg-white" />
      <SidePanels />
    </div>
  );
}
